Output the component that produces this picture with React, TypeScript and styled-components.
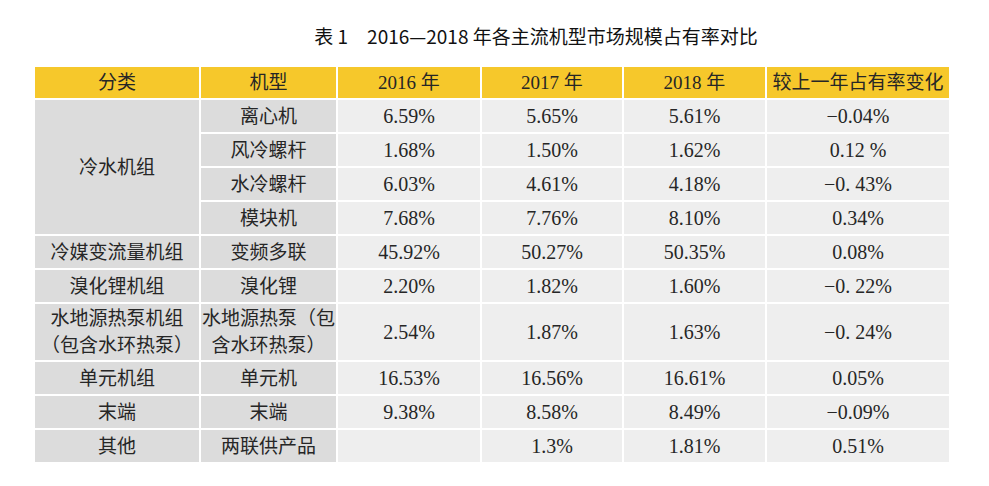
import styled, { createGlobalStyle } from "styled-components";

const Global = createGlobalStyle`
  body {
    margin: 0;
    background: #fff;
  }
`

const Page = styled.div`
  width: 989px;
  height: 486px;
  padding-top: 23px;
  box-sizing: border-box;
  font-family: "Liberation Serif", "Noto Sans CJK SC", serif;
  color: #262626;
`

const Title = styled.h1`
  margin: 0 0 16px 0;
  padding-left: 83px;
  text-align: center;
  font-family: "Noto Sans CJK SC", sans-serif;
  font-size: 19px;
  line-height: 26px;
  font-weight: 400;
  color: #111;
  white-space: pre;
`

const Table = styled.table`
  margin-left: 33px;
  border-collapse: collapse;
  table-layout: fixed;
  width: 916px;
`

const HeadCell = styled.th`
  background: #f6c82b;
  border: 2px solid #fff;
  height: 31px;
  padding: 0;
  font-size: 19px;
  line-height: 27px;
  font-weight: normal;
  text-align: center;
  vertical-align: middle;
`

/* 회색 셀: 분류 칸은 진하게, 수치 칸은 연하게 */
const Cell = styled.td<{ $dark?: boolean; $h?: number }>`
  background: ${(p) => (p.$dark ? "#dcdcdc" : "#eeeeee")};
  border: 2px solid #fff;
  height: ${(p) => p.$h ?? 32}px;
  padding: 0;
  font-size: 19px;
  line-height: 27px;
  text-align: center;
  vertical-align: middle;
`

const Num = styled.span`
  font-size: 20px;
`

const cols = [166, 137, 144, 142, 143, 184];

type Row = {
  group?: React.ReactNode;
  span?: number;
  type: React.ReactNode;
  v: string[];
  h?: number;
};

const rows: Row[] = [
  { group: "冷水机组", span: 4, type: "离心机", v: ["6.59%", "5.65%", "5.61%", "−0.04%"] },
  { type: "风冷螺杆", v: ["1.68%", "1.50%", "1.62%", "0.12 %"] },
  { type: "水冷螺杆", v: ["6.03%", "4.61%", "4.18%", "−0. 43%"] },
  { type: "模块机", v: ["7.68%", "7.76%", "8.10%", "0.34%"] },
  { group: "冷媒变流量机组", type: "变频多联", v: ["45.92%", "50.27%", "50.35%", "0.08%"] },
  { group: "溴化锂机组", type: "溴化锂", v: ["2.20%", "1.82%", "1.60%", "−0. 22%"] },
  {
    group: (
      <>
        水地源热泵机组
        <br />
        （包含水环热泵）
      </>
    ),
    type: (
      <>
        水地源热泵（包
        <br />
        含水环热泵）
      </>
    ),
    v: ["2.54%", "1.87%", "1.63%", "−0. 24%"],
    h: 56,
  },
  { group: "单元机组", type: "单元机", v: ["16.53%", "16.56%", "16.61%", "0.05%"] },
  { group: "末端", type: "末端", v: ["9.38%", "8.58%", "8.49%", "−0.09%"] },
  { group: "其他", type: "两联供产品", v: ["", "1.3%", "1.81%", "0.51%"] },
];

function App() {
  return (
    <>
      <Global />
      <Page>
        <Title>表 1　2016—2018 年各主流机型市场规模占有率对比</Title>
        <Table>
          <colgroup>
            {cols.map((w, i) => (
              <col key={i} style={{ width: w }} />
            ))}
          </colgroup>
          <thead>
            <tr>
              <HeadCell>分类</HeadCell>
              <HeadCell>机型</HeadCell>
              <HeadCell>2016 年</HeadCell>
              <HeadCell>2017 年</HeadCell>
              <HeadCell>2018 年</HeadCell>
              <HeadCell>较上一年占有率变化</HeadCell>
            </tr>
          </thead>
          <tbody>
            {rows.map((r, i) => (
              <tr key={i}>
                {r.group !== undefined && (
                  <Cell $dark rowSpan={r.span ?? 1} $h={r.h}>
                    {r.group}
                  </Cell>
                )}
                <Cell $dark $h={r.h}>{r.type}</Cell>
                {r.v.map((x, j) => (
                  <Cell key={j} $h={r.h}>
                    <Num>{x}</Num>
                  </Cell>
                ))}
              </tr>
            ))}
          </tbody>
        </Table>
      </Page>
    </>
  );
}

export default App;
